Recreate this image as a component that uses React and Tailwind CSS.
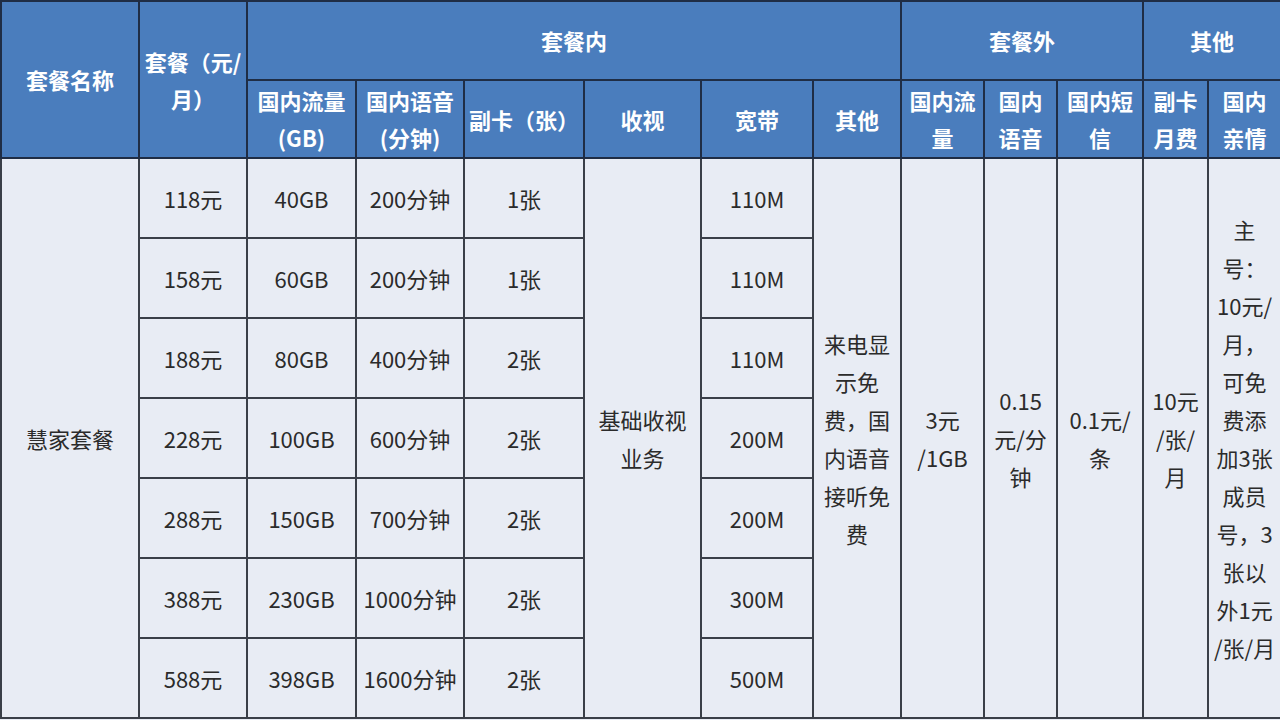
const rows = [
  ["118元", "40GB", "200分钟", "1张", "110M"],
  ["158元", "60GB", "200分钟", "1张", "110M"],
  ["188元", "80GB", "400分钟", "2张", "110M"],
  ["228元", "100GB", "600分钟", "2张", "200M"],
  ["288元", "150GB", "700分钟", "2张", "200M"],
  ["388元", "230GB", "1000分钟", "2张", "300M"],
  ["588元", "398GB", "1600分钟", "2张", "500M"],
];

const widths = [138, 108, 109, 108, 120, 117, 112, 88, 83, 73, 86, 65, 73];

const Lines = ({ items }) => (
  <>
    {items.map((t, i) => (
      <div key={i}>{t}</div>
    ))}
  </>
);

const th = "border-2 border-[#1f2d45] bg-[#4a7dbd] text-white font-bold text-center align-middle leading-[37px] p-0";
const td = "border-2 border-[#3a3f48] text-center align-middle leading-[38px] p-0";

export default function App() {
  return (
    <div
      className="w-[1280px] h-[720px] overflow-hidden bg-[#e8ecf4]"
      style={{ fontFamily: '"Noto Sans CJK SC", "Noto Sans", sans-serif' }}
    >
      <table className="w-[1280px] table-fixed border-collapse text-[22px] text-[#2b2b2b] bg-[#e8ecf4]">
        <colgroup>
          {widths.map((w, i) => (
            <col key={i} style={{ width: w }} />
          ))}
        </colgroup>
        <thead>
          <tr className="h-[79px]">
            <th rowSpan={2} className={th}>套餐名称</th>
            <th rowSpan={2} className={th}>
              <Lines items={["套餐（元/", "月）"]} />
            </th>
            <th colSpan={6} className={th}>套餐内</th>
            <th colSpan={3} className={th}>套餐外</th>
            <th colSpan={2} className={th}>其他</th>
          </tr>
          <tr className="h-[78px]">
            <th className={th}><Lines items={["国内流量", "(GB)"]} /></th>
            <th className={th}><Lines items={["国内语音", "(分钟)"]} /></th>
            <th className={th + " whitespace-nowrap"}>副卡（张）</th>
            <th className={th}>收视</th>
            <th className={th}>宽带</th>
            <th className={th}>其他</th>
            <th className={th}><Lines items={["国内流", "量"]} /></th>
            <th className={th}><Lines items={["国内", "语音"]} /></th>
            <th className={th}><Lines items={["国内短", "信"]} /></th>
            <th className={th}><Lines items={["副卡", "月费"]} /></th>
            <th className={th}><Lines items={["国内", "亲情"]} /></th>
          </tr>
        </thead>
        <tbody>
          {rows.map((r, i) => (
            <tr key={i} className="h-[80px]">
              {i === 0 && (
                <td rowSpan={7} className={td}>慧家套餐</td>
              )}
              <td className={td}>{r[0]}</td>
              <td className={td}>{r[1]}</td>
              <td className={td + " whitespace-nowrap"}>{r[2]}</td>
              <td className={td}>{r[3]}</td>
              {i === 0 && (
                <td rowSpan={7} className={td}>
                  <Lines items={["基础收视", "业务"]} />
                </td>
              )}
              <td className={td}>{r[4]}</td>
              {i === 0 && (
                <>
                  <td rowSpan={7} className={td}>
                    <Lines items={["来电显", "示免", "费，国", "内语音", "接听免", "费"]} />
                  </td>
                  <td rowSpan={7} className={td}>
                    <Lines items={["3元", "/1GB"]} />
                  </td>
                  <td rowSpan={7} className={td}>
                    <Lines items={["0.15", "元/分", "钟"]} />
                  </td>
                  <td rowSpan={7} className={td}>
                    <Lines items={["0.1元/", "条"]} />
                  </td>
                  <td rowSpan={7} className={td}>
                    <Lines items={["10元", "/张/", "月"]} />
                  </td>
                  <td rowSpan={7} className={td + " whitespace-nowrap"}>
                    <Lines
                      items={[
                        "主",
                        "号：",
                        "10元/",
                        "月，",
                        "可免",
                        "费添",
                        "加3张",
                        "成员",
                        "号，3",
                        "张以",
                        "外1元",
                        "/张/月",
                      ]}
                    />
                  </td>
                </>
              )}
            </tr>
          ))}
        </tbody>
      </table>
    </div>
  );
}
